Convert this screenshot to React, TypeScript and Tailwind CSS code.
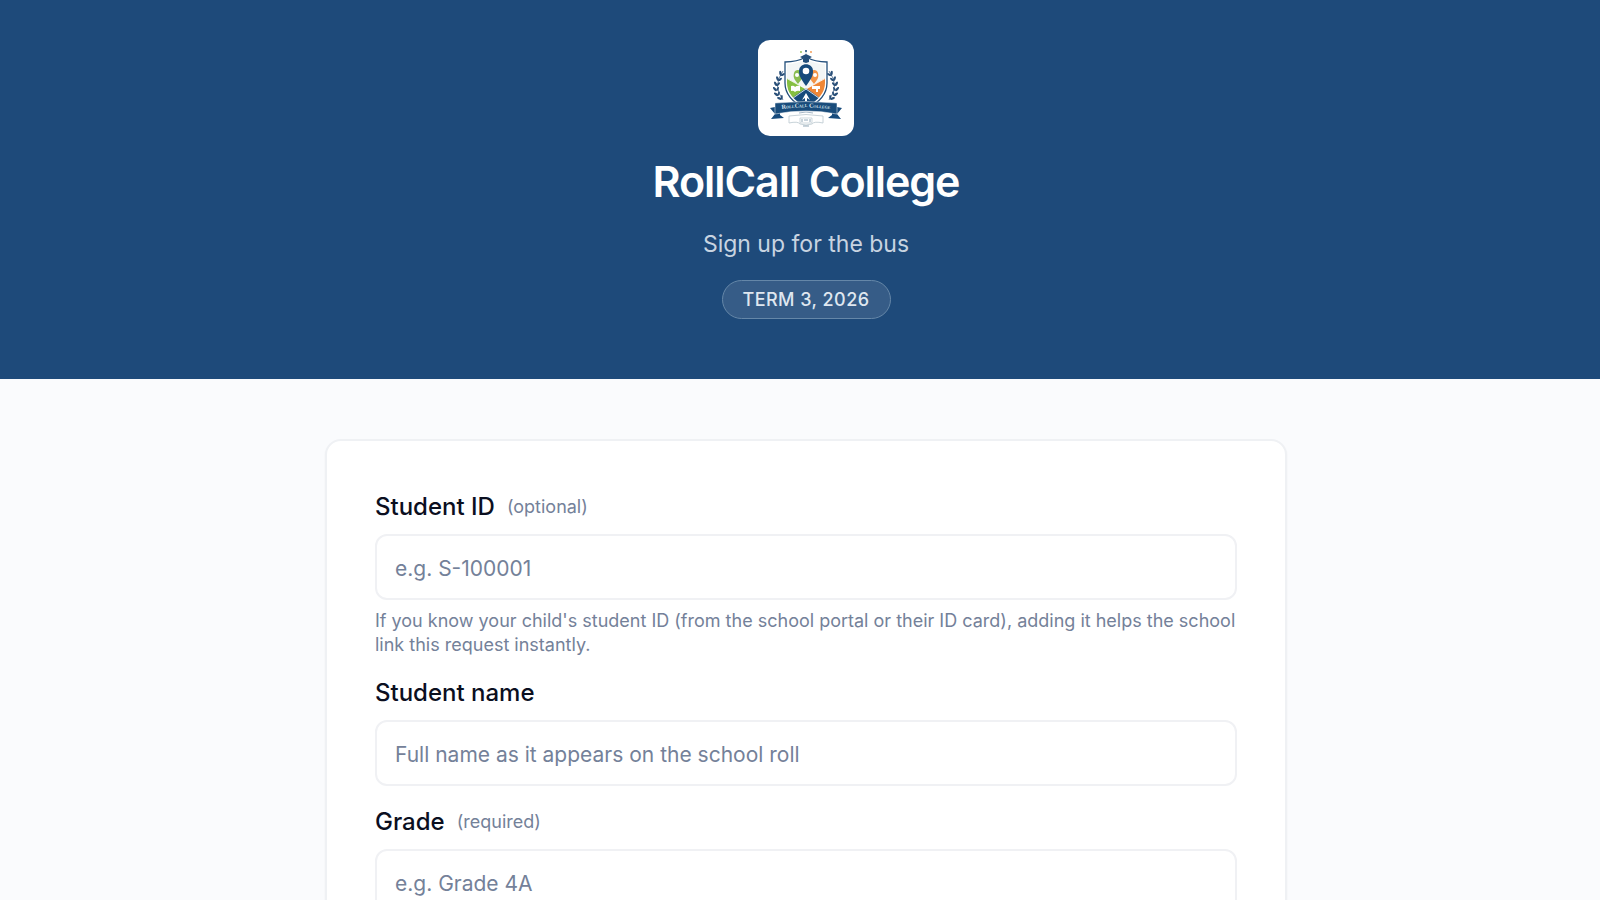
import { useId } from "react";

type FieldProps = {
  label: string;
  note?: string;
  placeholder: string;
  help?: string;
};

function Field({ label, note, placeholder, help }: FieldProps) {
  const id = useId();
  return (
    <div className="flex flex-col gap-[9px]">
      <label htmlFor={id} className="flex items-center gap-3 text-2xl leading-9 font-medium text-[#0b0f1f]">
        {label}
        {note && <span className="text-lg font-normal text-[#748199]">{note}</span>}
      </label>
      <input
        id={id}
        type="text"
        placeholder={placeholder}
        className="h-[66px] w-full rounded-xl border-2 border-[#f0f1f4] bg-white px-[18px] pt-[3px] text-[21px] text-slate-900 outline-none placeholder:text-[#748199] focus:border-[#1e4a7a]"
      />
      {help && <p className="text-lg leading-6 text-[#748199]">{help}</p>}
    </div>
  );
}

const leaves = [
  [24, 33, 25], [21, 38, 15], [19, 43, 5], [18, 48, -5], [19, 53, -18], [22, 57, -32],
];

function LaurelBranch() {
  return (
    <g fill="#294f78">
      <path d="M25 31Q14 46 25 60" fill="none" stroke="#294f78" strokeWidth="0.7" />
      {leaves.map(([x, y, angle]) => (
        <g key={y} transform={`translate(${x} ${y}) rotate(${angle})`}>
          <ellipse cx="-1.6" cy="0" rx="1.2" ry="2.5" transform="rotate(-35)" />
          <ellipse cx="1.8" cy="0" rx="1" ry="2.2" transform="rotate(35)" />
        </g>
      ))}
    </g>
  );
}

function Crest() {
  return (
    <svg viewBox="0 0 96 96" className="size-24" role="img" aria-label="RollCall College crest">
      <defs>
        <clipPath id="shield">
          <path d="M29 24Q39 24 48 19Q57 24 67 24V43Q67 57 48 67Q29 57 29 43Z" />
        </clipPath>
        <path id="ribbon-line" d="M17 70Q48 65 79 70" />
      </defs>
      <LaurelBranch />
      <g transform="translate(96 0) scale(-1 1)">
        <LaurelBranch />
      </g>
      <path d="M27 22Q39 22 48 17Q57 22 69 22V43Q69 59 48 69Q27 59 27 43Z" fill="#fff" stroke="#234f7b" strokeWidth="1.3" />
      <g clipPath="url(#shield)">
        <path d="M27 17H69V46L48 48L27 38Z" fill="#f3f6f6" />
        <path d="M27 37L48 49L27 64Z" fill="#85bf42" />
        <path d="M69 37L48 49L69 64Z" fill="#ef8737" />
        <path d="M48 48L70 64V72H26V64Z" fill="#174b7c" />
        <path d="M28 38L48 49L68 38M28 63L48 49L68 63" fill="none" stroke="#fff" strokeWidth="0.8" />
      </g>
      <path d="M40 44C36 39 35 37 36 33C37 29 43 29 45 34C46 37 43 40 40 44Z" fill="#8abd4f" />
      <path d="M56 44C60 39 61 37 60 33C59 29 53 29 51 34C50 37 53 40 56 44Z" fill="#f29447" />
      <circle cx="39" cy="35" r="2" fill="#fff" />
      <circle cx="57" cy="35" r="2" fill="#fff" />
      <path d="M48 46C42 38 41 35 41 31C41 22 55 22 55 31C55 35 54 38 48 46Z" fill="#174b7c" />
      <circle cx="48" cy="31" r="3.3" fill="#fff" />
      <path d="M33 46Q36 45 37 47Q39 45 42 46V51Q39 50 37 52Q35 50 33 51Z" fill="#fff" />
      <path d="M54 46H62V49H60V52H58V49H54Z" fill="#fff" />
      <path d="M44 60L48 53L52 60L49 58V61H47V58Z" fill="#fff" />
      <path d="M42 17L48 14L54 17L48 20Z M45 19H51V22L48 23L45 22Z" fill="#234f7b" />
      <path d="M48 10V14" stroke="#b4c9cf" strokeWidth="0.8" />
      <circle cx="43" cy="12" r="0.9" fill="#8abd4f" />
      <circle cx="48" cy="11" r="1" fill="#174b7c" />
      <circle cx="53" cy="12" r="0.9" fill="#f29447" />
      <path d="M12 68L22 66V75L26 78L13 79L17 74Z M84 68L74 66V75L70 78L83 79L79 74Z" fill="#174b7c" />
      <path d="M17 63Q48 60 79 63V74Q48 68 17 74Z" fill="#194c7b" stroke="#fff" strokeWidth="0.5" />
      <text
        fill="#d9e5ee"
        fontFamily="Liberation Serif, serif"
        fontSize="6.2"
        fontWeight="700"
        textAnchor="middle"
        className="[font-variant-caps:small-caps]"
      >
        <textPath href="#ribbon-line" startOffset="50%">RollCall College</textPath>
      </text>
      <path d="M41 73Q48 71 55 73" fill="none" stroke="#7f98ac" strokeWidth="0.7" />
      <path d="M31 76Q48 73 65 76V83Q56 81 54 84Q48 86 42 84Q40 81 31 83Z" fill="#fff" stroke="#b9c7ce" strokeWidth="0.8" />
      <path d="M42 78H54V83H42Z" fill="#fff" stroke="#b9c7ce" strokeWidth="0.7" />
      <path d="M44 79V82M46 80H50M52 79V82M45 86H51" fill="none" stroke="#7896a7" strokeWidth="0.8" />
    </svg>
  );
}

export default function App() {
  return (
    <div className="min-h-screen bg-[#fafbfd] font-['Inter',sans-serif]">
      <header className="flex flex-col items-center bg-[#1e4a7a] pt-10 pr-6 pb-[60px] pl-9 text-center text-white">
        <div className="overflow-hidden rounded-xl bg-white">
          <Crest />
        </div>
        <h1 className="mt-[18px] text-[43px] leading-[54px] font-semibold tracking-tight">RollCall College</h1>
        <p className="mt-[18px] text-[23px] leading-9 text-[#c8d4e1]">Sign up for the bus</p>
        <span className="mt-[18px] rounded-full border border-[#6587a8] bg-[#365c87] px-5 py-[6px] text-lg leading-[25px] font-medium tracking-wide text-[#dfe7f0]">
          TERM 3, 2026
        </span>
      </header>
      <main className="py-[60px] pr-6 pl-9">
        <form className="mx-auto flex max-w-[962px] flex-col gap-[18px] rounded-2xl border-2 border-[#eff1f4] bg-white p-12 shadow-xs">
          <Field
            label="Student ID"
            note="(optional)"
            placeholder="e.g. S-100001"
            help="If you know your child's student ID (from the school portal or their ID card), adding it helps the school link this request instantly."
          />
          <Field label="Student name" placeholder="Full name as it appears on the school roll" />
          <Field label="Grade" note="(required)" placeholder="e.g. Grade 4A" />
        </form>
      </main>
    </div>
  );
}
